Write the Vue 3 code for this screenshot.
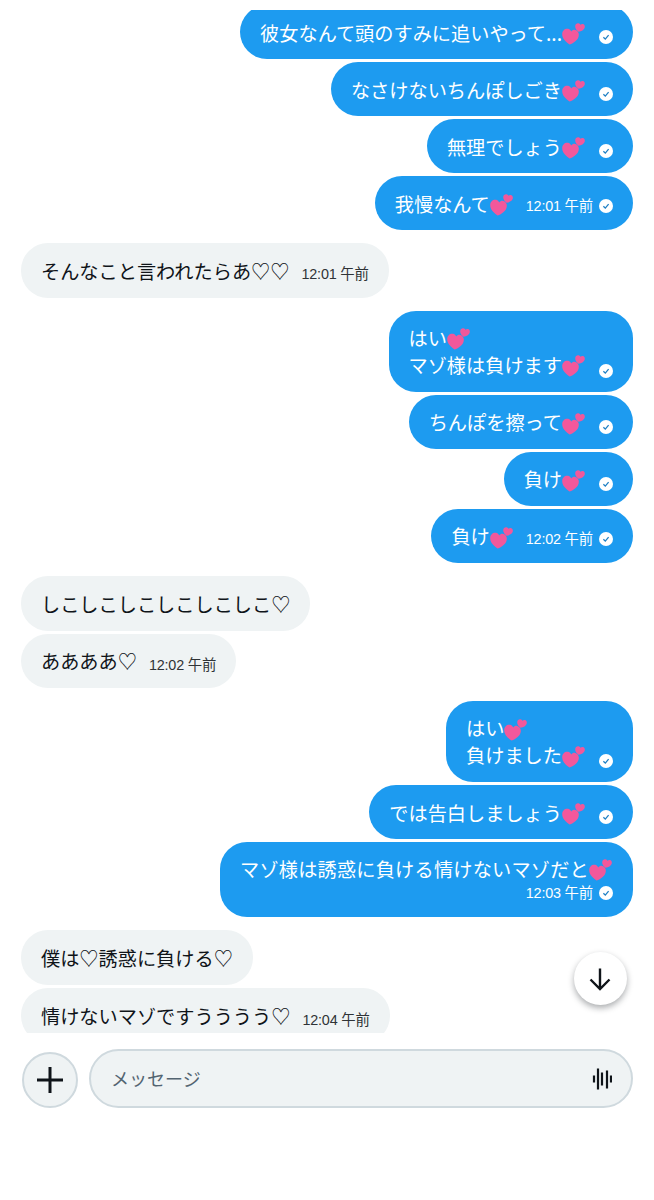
<script setup>
const groups = [
  {
    side: 'me',
    items: [
      { lines: ['彼女なんて頭のすみに追いやって...'], check: true },
      { lines: ['なさけないちんぽしごき'], check: true },
      { lines: ['無理でしょう'], check: true },
      { lines: ['我慢なんて'], time: '12:01 午前' }
    ]
  },
  { side: 'them', items: [{ lines: ['そんなこと言われたらあ♡♡'], time: '12:01 午前' }] },
  {
    side: 'me',
    items: [
      { lines: ['はい', 'マゾ様は負けます'], check: true },
      { lines: ['ちんぽを擦って'], check: true },
      { lines: ['負け'], check: true },
      { lines: ['負け'], time: '12:02 午前' }
    ]
  },
  {
    side: 'them',
    items: [
      { lines: ['しこしこしこしこしこしこ♡'] },
      { lines: ['ああああ♡'], time: '12:02 午前' }
    ]
  },
  {
    side: 'me',
    items: [
      { lines: ['はい', '負けました'], check: true },
      { lines: ['では告白しましょう'], check: true },
      { lines: ['マゾ様は誘惑に負ける情けないマゾだと'], time: '12:03 午前', stacked: true }
    ]
  },
  {
    side: 'them',
    items: [
      { lines: ['僕は♡誘惑に負ける♡'] },
      { lines: ['情けないマゾですうううう♡'], time: '12:04 午前' }
    ]
  }
]
</script>

<template>
  <div class="screen">
    <div class="scroller">
      <div class="thread">
        <div v-for="(group, g) in groups" :key="g" class="group" :class="group.side">
          <div
            v-for="(msg, m) in group.items"
            :key="m"
            class="bubble"
            :class="{ multi: msg.lines.length > 1, stacked: msg.stacked }"
          >
            <div class="text">
              <div v-for="(line, l) in msg.lines" :key="l" class="line">
                <span>{{ line }}</span>
                <svg v-if="group.side === 'me'" class="hearts" viewBox="0 0 24 24">
                  <path fill="#f2589b" d="M7.5 23.500C3 20.500 0 17 .2 12.800.4 9.300 3.200 7.200 6 7.800c1.500.3 2.600 1.300 3.200 2.600 1-1.200 2.500-1.900 4.100-1.500 2.700.7 4.200 3.500 3.300 6.500-1.100 3.900-4.600 6.400-9.100 8.100z" />
                  <path fill="#f2589b" d="M16.500 10.800c-2-1.700-3.500-3.600-3.300-5.900.2-1.900 1.700-3 3.300-2.700.9.200 1.600.8 2 1.600.7-.6 1.600-1 2.500-.7 1.600.5 2.300 2.200 1.600 3.900-.8 2-2.900 3.100-6.100 3.800z" />
                </svg>
              </div>
            </div>
            <div v-if="msg.time || msg.check" class="meta" :class="{ low: !msg.time }">
              <span v-if="msg.time" class="time">{{ msg.time }}</span>
              <svg v-if="group.side === 'me'" class="check" viewBox="0 0 14 14">
                <circle cx="7" cy="7" r="7" fill="#fff" />
                <path d="M4.400 7.200l1.900 1.900 3.300-3.900" fill="none" stroke="#1d7fc4" stroke-width="1.300" />
              </svg>
            </div>
          </div>
        </div>
      </div>
      <button class="down">
        <svg viewBox="0 0 24 24" width="24" height="24">
          <path d="M12 1.500v20M2.500 12.500l9.500 9.500 9.500-9.500" fill="none" stroke="#0f1419" stroke-width="2.400" />
        </svg>
      </button>
    </div>
    <div class="composer">
      <button class="plus">
        <svg viewBox="0 0 28 28" width="28" height="28">
          <path d="M14 1v26M1 14h26" stroke="#0f1419" stroke-width="3" fill="none" />
        </svg>
      </button>
      <div class="input">
        <span class="placeholder">メッセージ</span>
        <svg class="wave" viewBox="0 0 20 22" width="20" height="22">
          <path d="M2 7.500v7M6 0.500v21M10 4.500v13M15 2.500v18M19 7.500v7" stroke="#0f1419" stroke-width="2.200" fill="none" />
        </svg>
      </div>
    </div>
  </div>
</template>

<style scoped>
.screen {
  width: 654px;
  height: 1200px;
  background: #fff;
  font-family: "Noto Sans CJK JP", "Noto Sans", sans-serif;
  color: #0f1419;
  overflow: hidden;
  padding-top: 10px;
  box-sizing: border-box;
}

.scroller {
  position: relative;
  height: 1023px;
  overflow: hidden;
}

.thread {
  margin-top: -5px;
  padding: 0 21px;
  display: flex;
  flex-direction: column;
  gap: 13px;
}

.group {
  display: flex;
  flex-direction: column;
  gap: 3px;
}

.group.me {
  align-items: flex-end;
}

.group.them {
  align-items: flex-start;
}

.bubble {
  min-height: 54px;
  box-sizing: border-box;
  border-radius: 27px;
  padding: 0 20px;
  display: flex;
  align-items: center;
  font-size: 19.2px;
  line-height: 27px;
}

.me .bubble {
  background: #1d9bf0;
  color: #fff;
}

.them .bubble {
  background: #eff3f4;
  min-height: 54.8px;
}

.text {
  padding-top: 2px;
}

.bubble.multi {
  padding-top: 12px;
  padding-bottom: 13px;
  align-items: flex-end;
}

.bubble.stacked {
  flex-direction: column;
  align-items: flex-end;
  justify-content: center;
  min-width: 411px;
  padding-top: 13px;
  padding-bottom: 14px;
  line-height: 28px;
  letter-spacing: 0.2px;
}

.stacked .text {
  padding-top: 0;
}

.line {
  display: flex;
  align-items: center;
  white-space: nowrap;
}

.hearts {
  width: 24px;
  height: 24px;
  flex: none;
}

.meta {
  display: flex;
  align-items: center;
  gap: 6px;
  margin-left: 12px;
  margin-top: 6px;
}

.stacked .meta {
  margin-left: 0;
  margin-top: 0;
}

.meta.low {
  align-self: flex-end;
  margin-bottom: 15px;
  margin-left: 13px;
}

.multi .meta.low {
  margin-bottom: 1px;
}

.time {
  font-family: "Liberation Sans", "Noto Sans CJK JP", sans-serif;
  font-size: 14.4px;
  letter-spacing: -0.2px;
  line-height: 20px;
  white-space: nowrap;
}

.them .time {
  color: #2f3336;
  margin-top: 2px;
}

.check {
  width: 14px;
  height: 14px;
  flex: none;
}

.down {
  position: absolute;
  right: 27px;
  top: 942px;
  width: 53px;
  height: 53px;
  border: none;
  border-radius: 50%;
  padding: 0 1px 0 0;
  background: #fff;
  box-shadow: 0 3px 6px rgba(15, 20, 25, 0.35);
  display: flex;
  align-items: center;
  justify-content: center;
}

.composer {
  margin-top: 16px;
  padding: 0 21px 0 22px;
  display: flex;
  align-items: center;
  gap: 11px;
}

.plus {
  width: 56px;
  height: 56px;
  flex: none;
  margin-top: 2px;
  border-radius: 50%;
  border: 2px solid #cfd9de;
  background: #eff3f4;
  padding: 0;
  display: flex;
  align-items: center;
  justify-content: center;
}

.input {
  flex: 1;
  height: 59px;
  box-sizing: border-box;
  border-radius: 30px;
  border: 2px solid #cfd9de;
  background: #eff3f4;
  display: flex;
  align-items: center;
  justify-content: space-between;
  padding: 0 19px 0 20px;
}

.placeholder {
  font-size: 18px;
  color: #536471;
  margin-bottom: 2px;
}
</style>
